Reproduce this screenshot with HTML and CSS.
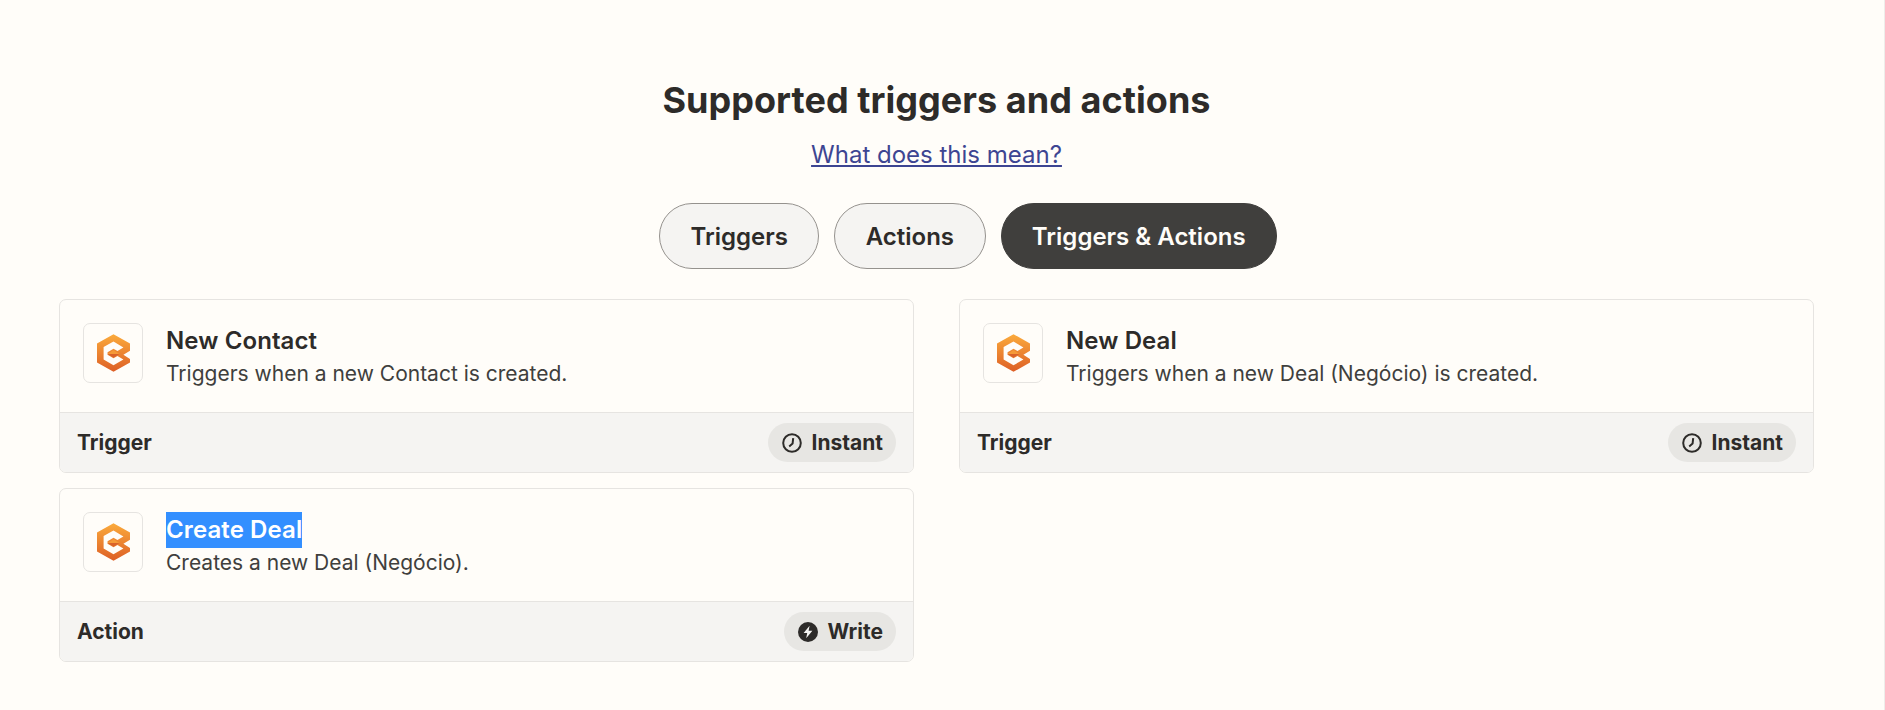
FILE: index.html
```html
<!DOCTYPE html>
<html lang="en">
<head>
  <meta charset="UTF-8" />
  <title>Supported triggers and actions</title>
  <link rel="stylesheet" href="styles.css">
</head>
<body>
  <svg class="defs" width="0" height="0">
    <defs>
      <linearGradient id="logoFill" x1="0" y1="0" x2="0" y2="1">
        <stop offset="0" stop-color="#fbab3c" />
        <stop offset="1" stop-color="#dd5f26" />
      </linearGradient>
      <symbol id="logo" viewBox="0 0 100 114">
        <polygon fill="url(#logoFill)" points="50,0 100,28 100,50 80,62 100,75 100,86 50,114 0,86 0,28" />
        <polygon fill="#fffdf9" points="50,22 80,40 62,51 50,44 32,55 32,62 50,73 62,66 80,77 50,94 20,77 20,39" />
        <polygon fill="#f59a38" points="32,60 50,49 68,60" />
        <polygon fill="#d9622b" points="32,60 68,60 50,71" />
      </symbol>
    </defs>
  </svg>

  <section class="wrap">
    <h1>Supported triggers and actions</h1>
    <a class="help" href="#">What does this mean?</a>

    <div class="tabs">
      <button class="tab">Triggers</button>
      <button class="tab">Actions</button>
      <button class="tab active">Triggers &amp; Actions</button>
    </div>

    <div class="cards">
      <div class="card">
        <div class="card-top">
          <div class="logo"><svg width="33" height="38"><use href="#logo" /></svg></div>
          <div class="card-text">
            <div class="title">New Contact</div>
            <div class="desc">Triggers when a new Contact is created.</div>
          </div>
        </div>
        <div class="card-foot">
          <span class="kind">Trigger</span>
          <span class="pill">
            <svg width="20" height="20" viewBox="0 0 20 20"><circle cx="10" cy="10" r="8.8" fill="none" stroke="#2d2b29" stroke-width="2" /><path d="M11.2 5.2 L10.6 10.6 L7.2 13.4" fill="none" stroke="#2d2b29" stroke-width="2" /></svg>
            Instant
          </span>
        </div>
      </div>

      <div class="card">
        <div class="card-top">
          <div class="logo"><svg width="33" height="38"><use href="#logo" /></svg></div>
          <div class="card-text">
            <div class="title">New Deal</div>
            <div class="desc">Triggers when a new Deal (Negócio) is created.</div>
          </div>
        </div>
        <div class="card-foot">
          <span class="kind">Trigger</span>
          <span class="pill">
            <svg width="20" height="20" viewBox="0 0 20 20"><circle cx="10" cy="10" r="8.8" fill="none" stroke="#2d2b29" stroke-width="2" /><path d="M11.2 5.2 L10.6 10.6 L7.2 13.4" fill="none" stroke="#2d2b29" stroke-width="2" /></svg>
            Instant
          </span>
        </div>
      </div>

      <div class="card">
        <div class="card-top">
          <div class="logo"><svg width="33" height="38"><use href="#logo" /></svg></div>
          <div class="card-text">
            <div class="title"><span class="picked">Create Deal</span></div>
            <div class="desc">Creates a new Deal (Negócio).</div>
          </div>
        </div>
        <div class="card-foot">
          <span class="kind">Action</span>
          <span class="pill">
            <svg width="20" height="20" viewBox="0 0 20 20"><circle cx="10" cy="10" r="10" fill="#2d2b29" /><path d="M11.6 3.8 L5.6 11 H9.2 L8.2 16.2 L14.4 8.8 H10.6 Z" fill="#f5f4f2" /></svg>
            Write
          </span>
        </div>
      </div>
    </div>
  </section>
</body>
</html>
```

FILE: styles.css
```css
* {
  box-sizing: border-box;
}
body {
  margin: 0;
  min-height: 100vh;
  border-right: 1px solid #eeedea;
  background: #fffdf9;
  color: #2d2b29;
  font-family: 'Inter', sans-serif;
}
.defs {
  position: absolute;
}
.wrap {
  width: 1755px;
  margin-left: 59px;
  padding-top: 76px;
  display: flex;
  flex-direction: column;
  align-items: center;
}
h1 {
  margin: 0;
  font-size: 36px;
  line-height: 48px;
  font-weight: 700;
  letter-spacing: 0.05px;
}
.help {
  margin-top: 15px;
  font-size: 24px;
  line-height: 32px;
  color: #3d4592;
}
.tabs {
  display: flex;
  gap: 15px;
  margin-top: 32px;
  margin-bottom: 30px;
  margin-left: 63px;
}
.tab {
  height: 66px;
  min-width: 152px;
  padding: 0 30px;
  border: 1px solid #95928e;
  border-radius: 33px;
  background: #f5f4f2;
  color: #2d2b29;
  font-family: inherit;
  font-size: 24px;
  font-weight: 600;
}
.tab.active {
  background: #403f3d;
  border-color: #403f3d;
  color: #fffdf9;
}
.cards {
  width: 100%;
  display: grid;
  grid-template-columns: 855px 855px;
  column-gap: 45px;
  row-gap: 15px;
  align-items: start;
}
.card {
  height: 174px;
  border: 1px solid #e6e4e1;
  border-radius: 7px;
  overflow: hidden;
  display: flex;
  flex-direction: column;
}
.card-top {
  flex: 1;
  display: flex;
  align-items: flex-start;
  gap: 23px;
  padding: 23px 23px 0;
}
.logo {
  width: 60px;
  height: 60px;
  flex: none;
  border: 1px solid #e6e4e1;
  border-radius: 7px;
  display: flex;
  align-items: center;
  justify-content: center;
}
.logo svg {
  display: block;
}
.title {
  font-size: 24px;
  line-height: 36px;
  font-weight: 600;
  letter-spacing: 0.1px;
}
.picked {
  display: inline-block;
  background: #338fff;
  color: #fff;
}
.desc {
  margin-top: 1px;
  font-size: 21px;
  line-height: 28px;
  color: #403f3d;
}
.card-foot {
  height: 60px;
  flex: none;
  border-top: 1px solid #e6e4e1;
  background: #f5f4f2;
  display: flex;
  align-items: center;
  justify-content: space-between;
  padding: 0 17px;
}
.kind {
  font-size: 21px;
  font-weight: 700;
}
.pill {
  height: 39px;
  border-radius: 20px;
  padding: 0 13px 0 14px;
  background: #e7e6e3;
  display: flex;
  align-items: center;
  gap: 10px;
  font-size: 21px;
  font-weight: 700;
}
```
